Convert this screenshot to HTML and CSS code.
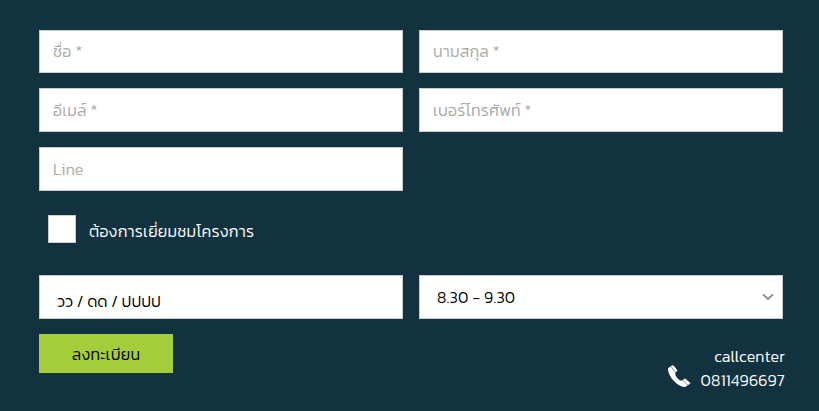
FILE: index.html
```html
<!DOCTYPE html>
<html lang="th">
<head>
  <meta charset="UTF-8">
  <meta name="viewport" content="width=device-width, initial-scale=1.0">
  <title>ลงทะเบียน</title>
  <link rel="stylesheet" href="styles.css">
</head>
<body>
  <form class="register">
    <div class="fields">
      <input type="text" class="field" placeholder="ชื่อ *">
      <input type="text" class="field" placeholder="นามสกุล *">
      <input type="email" class="field" placeholder="อีเมล์ *">
      <input type="tel" class="field" placeholder="เบอร์โทรศัพท์ *">
      <input type="text" class="field" placeholder="Line">
    </div>

    <label class="visit">
      <input type="checkbox" class="visit-box">
      <span class="visit-text">ต้องการเยี่ยมชมโครงการ</span>
    </label>

    <div class="fields">
      <div class="field date"><span class="date-text">วว / ดด / ปปปป</span></div>
      <div class="field time">
        <span class="time-text">8.30 - 9.30</span>
        <svg class="arrow" viewBox="0 0 12 8"><path d="M1 1.300 6 6l5-4.700"/></svg>
      </div>
    </div>

    <div class="bottom">
      <button type="button" class="btn">ลงทะเบียน</button>
      <div class="callcenter">
        <svg class="phone" viewBox="0 0 24 24">
          <path d="M1 5C1 12 10 22.800 18 23L22.800 20C23.400 19.500 23.300 18.800 22.800 18.400L19 15.200C18.400 14.700 17.900 14.600 17.200 15L15.500 16.200C13.500 17 12.600 16.300 10.800 14.500 8.800 12.400 7.700 10.700 8.500 8.600L9.800 7.400C10.300 6.900 10.400 6.300 10 5.700L6.800 1.700C6.300 1.100 5.800 1 5.200 1.300L2.500 3.200C1.500 3.700 1 4.200 1 5z"/>
          <path class="phone-seam" d="M3.800 2.500 8.800 8.400M15.500 16.100 21 21.300"/>
        </svg>
        <div class="call-info">
          <div class="call-name">callcenter</div>
          <div class="call-number">0811496697</div>
        </div>
      </div>
    </div>
  </form>
</body>
</html>
```
FILE: styles.css
```css
* {
  margin: 0;
  padding: 0;
  box-sizing: border-box;
}
body {
  background: #13323f;
  font-family: Kanit, Prompt, "Noto Sans Thai", "Open Sans", sans-serif;
  font-size: 16px;
  font-weight: 300;
  letter-spacing: 0.2px;
  color: #fff;
}
.register {
  padding: 29.6px 34px 0 39px;
}
.fields {
  display: grid;
  grid-template-columns: 364px 364px;
  gap: 14.9px 16px;
}
.field {
  width: 100%;
  height: 43.8px;
  padding: 0 13px;
  border: 1px solid #ccc;
  background: #fff;
  color: #000;
  font: inherit;
  letter-spacing: inherit;
}
.field::placeholder {
  color: #aaa;
}
.visit {
  display: flex;
  align-items: flex-start;
  height: 84.2px;
  padding: 24.2px 9px 0;
  gap: 13px;
}
.visit-box {
  appearance: none;
  width: 28px;
  height: 28px;
  border: 1px solid #ccc;
  background: #fff;
}
.visit-text {
  line-height: 32px;
}
.date,
.time {
  display: flex;
  align-items: center;
  justify-content: space-between;
  padding: 0 8px 0 17px;
}
.date {
  padding-top: 8px;
  letter-spacing: 0;
}
.arrow {
  width: 12px;
  height: 8px;
  fill: none;
  stroke: #888;
  stroke-width: 1.8;
}
.bottom {
  display: flex;
  justify-content: space-between;
  padding-top: 15px;
}
.btn {
  width: 134px;
  height: 39px;
  padding-top: 2px;
  border: none;
  background: #a4cd39;
  color: #000;
  font: inherit;
  letter-spacing: inherit;
}
.callcenter {
  display: flex;
  gap: 10px;
  padding-top: 10px;
}
.phone {
  width: 24px;
  height: 24px;
  margin-top: 20px;
  fill: #fff;
}
.phone-seam {
  stroke: #13323f;
  stroke-width: 0.5;
}
.call-info {
  line-height: 24px;
  text-align: right;
}
```
